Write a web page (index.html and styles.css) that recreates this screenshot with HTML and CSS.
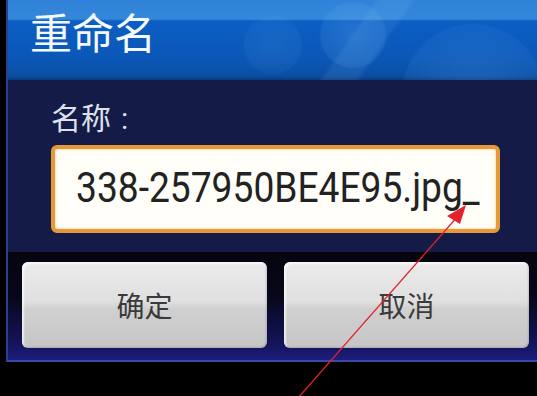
FILE: index.html
```html
<!DOCTYPE html>
<html lang="zh-CN">
	<head>
		<meta charset="utf-8">
		<title>重命名</title>
		<link rel="stylesheet" href="styles.css">
	</head>
	<body>
		<div class="dialogo">
			<div class="titulo">重命名</div>
			<div class="contenido">
				<p class="etiqueta">名称<span class="puntos">:</span></p>
				<div class="campo"><span class="texto">338-257950BE4E95.jpg_</span></div>
			</div>
			<div class="botones">
				<div class="boton">确定</div>
				<div class="boton">取消</div>
			</div>
		</div>
		<!-- flecha roja sobre la captura -->
		<svg class="flecha" width="537" height="396" viewBox="0 0 537 396">
			<line x1="298" y1="398" x2="458" y2="216" stroke="#e3222c" stroke-width="1.3" />
			<polygon points="466,205 447,216 460,224" fill="#e3222c" />
		</svg>
	</body>
</html>
```

FILE: styles.css
```css
* {
	margin: 0;
	padding: 0;
	box-sizing: border-box;
}
body {
	background-color: #000;
	width: 537px;
	height: 396px;
	overflow: hidden;
	position: relative;
	font-family: "Noto Sans CJK SC", "Open Sans", sans-serif;
}

.dialogo {
	margin-left: 6px;
	width: 560px;
	border-left: 2px solid #2b3d8c;
	border-bottom: 2px solid #3a4aa6;
}

/*barra de titulo*/
.titulo {
	height: 80px;
	padding-left: 22px;
	color: #f4f8ff;
	font-size: 42px;
	line-height: 62px;
	background:
		linear-gradient(125deg, rgba(255,255,255,0) 0, rgba(255,255,255,0) 300px, rgba(150,210,255,0.1) 305px, rgba(150,210,255,0.1) 330px, rgba(255,255,255,0) 335px),
		radial-gradient(circle at 345px 35px, rgba(130,200,255,0.2) 0, rgba(130,200,255,0.1) 32px, rgba(130,200,255,0) 34px),
		radial-gradient(circle at 265px 45px, rgba(130,200,255,0.1) 0, rgba(130,200,255,0.06) 28px, rgba(130,200,255,0) 30px),
		radial-gradient(circle at 465px 95px, rgba(110,180,255,0.2) 0, rgba(110,180,255,0.08) 70px, rgba(110,180,255,0) 72px),
		linear-gradient(to bottom, #2f82d8 0, #3488da 19px, #0b5ec4 21px, #0b57b6 60px, #0a4ea3 76px, #0a3a7e 80px);
}

.contenido {
	background-color: #151b47;
	padding: 16px 0 19px 43px;
}

.etiqueta {
	color: #dde1ec;
	font-size: 30px;
	line-height: 40px;
	height: 40px;
	margin-bottom: 9px;
}

.puntos {
	font-family: Roboto, sans-serif;
	line-height: 1;
	margin-left: 10px;
}

/*caja de texto*/
.campo {
	width: 449px;
	height: 88px;
	border: 4px solid #e59a3a;
	border-radius: 6px;
	background-color: #fffef9;
	box-shadow: inset 0 0 3px #f2c27a;
	padding-left: 21px;
	white-space: nowrap;
}

.texto {
	display: inline-block;
	font-family: Roboto, sans-serif;
	font-size: 42px;
	line-height: 78px;
	color: #222;
	transform: scaleX(0.885);
	transform-origin: left center;
}

.botones {
	display: flex;
	gap: 17px;
	padding: 10px 0 12px 14px;
	background: linear-gradient(to bottom, #05050e 0, #07071a 40%, #14145a 85%, #1d1d80 100%);
}

.boton {
	width: 245px;
	height: 86px;
	border-radius: 6px;
	background: linear-gradient(to bottom, #ebebeb 0, #e0e0e0 45%, #d0d0d0 55%, #c6c6c6 100%);
	box-shadow: inset 2px 2px 2px rgba(255,255,255,0.7), inset -1px -1px 2px rgba(0,0,0,0.15);
	color: #3a3a3a;
	font-size: 28px;
	line-height: 86px;
	text-align: center;
}

.flecha {
	position: absolute;
	left: 0;
	top: 0;
}
```
